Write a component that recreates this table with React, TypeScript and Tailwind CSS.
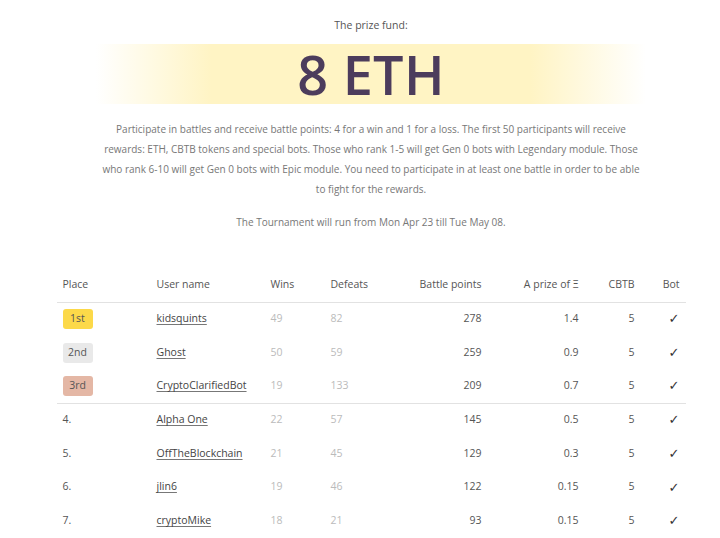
const rows = [
  { place: "1st", badge: "bg-[#fcd949]", name: "kidsquints", wins: 49, defeats: 82, points: 278, prize: "1.4", cbtb: 5 },
  { place: "2nd", badge: "bg-[#e9e9e9]", name: "Ghost", wins: 50, defeats: 59, points: 259, prize: "0.9", cbtb: 5 },
  { place: "3rd", badge: "bg-[#e4b7a5]", name: "CryptoClarifiedBot", wins: 19, defeats: 133, points: 209, prize: "0.7", cbtb: 5 },
  { place: "4.", name: "Alpha One", wins: 22, defeats: 57, points: 145, prize: "0.5", cbtb: 5 },
  { place: "5.", name: "OffTheBlockchain", wins: 21, defeats: 45, points: 129, prize: "0.3", cbtb: 5 },
  { place: "6.", name: "jlin6", wins: 19, defeats: 46, points: 122, prize: "0.15", cbtb: 5 },
  { place: "7.", name: "cryptoMike", wins: 18, defeats: 21, points: 93, prize: "0.15", cbtb: 5 },
];

export default function App() {
  return (
    <div
      className="min-h-screen bg-white pl-[22px] pt-[17px] text-[#555] text-[10.5px]"
      style={{ fontFamily: '"Open Sans", "DejaVu Sans", sans-serif' }}
    >
      {/* Prize fund */}
      <div className="text-center leading-[16px]">The prize fund:</div>
      <div className="mx-auto mt-[11px] h-[60px] w-[550px] bg-[linear-gradient(to_right,rgba(255,244,196,0)_0%,#fff4c4_21%,#fff4c4_79%,rgba(255,244,196,0)_100%)] flex items-center justify-center">
        <span className="text-[54px] font-semibold leading-none tracking-[0.3px] text-[#4c3c5c]">8 ETH</span>
      </div>

      <p className="mx-auto mt-[15px] w-[600px] text-center text-[10px] leading-[20px] text-[#777]">
        Participate in battles and receive battle points: 4 for a win and 1 for a loss. The first 50 participants will receive
        <br />
        rewards: ETH, CBTB tokens and special bots. Those who rank 1-5 will get Gen 0 bots with Legendary module. Those
        <br />
        who rank 6-10 will get Gen 0 bots with Epic module. You need to participate in at least one battle in order to be able
        <br />
        to fight for the rewards.
      </p>
      <p className="mt-[13px] text-center text-[10px] leading-[20px] text-[#777]">
        The Tournament will run from Mon Apr 23 till Tue May 08.
      </p>

      {/* Leaderboard */}
      <table className="mx-auto mt-[36px] w-[629px] border-collapse">
        <thead>
          <tr className="h-[34px] border-b border-[#e2e2e2] text-[#555]">
            <th className="w-[100px] pl-[6px] text-left font-normal">Place</th>
            <th className="w-[114px] text-left font-normal">User name</th>
            <th className="w-[60px] text-left font-normal">Wins</th>
            <th className="w-[60px] text-left font-normal">Defeats</th>
            <th className="w-[91px] text-right font-normal">Battle points</th>
            <th className="w-[97px] text-right font-normal">A prize of Ξ</th>
            <th className="w-[56px] text-right font-normal">CBTB</th>
            <th className="pr-[6px] text-right font-normal">Bot</th>
          </tr>
        </thead>
        <tbody>
          {rows.map((r, i) => (
            <tr key={r.name} className={`h-[33.7px] ${i === 2 ? "border-b border-[#e2e2e2]" : ""}`}>
              <td className="pl-[6px]">
                {r.badge ? (
                  <span className={`inline-flex h-[20px] w-[30px] items-center justify-center rounded-[3px] text-[#555] ${r.badge}`}>
                    {r.place}
                  </span>
                ) : (
                  <span className="text-[#555]">{r.place}</span>
                )}
              </td>
              <td>
                <a className="text-[#444] underline underline-offset-2 decoration-[#777]">{r.name}</a>
              </td>
              <td className="text-[#bbb]">{r.wins}</td>
              <td className="text-[#bbb]">{r.defeats}</td>
              <td className="text-right">{r.points}</td>
              <td className="text-right">{r.prize}</td>
              <td className="text-right">{r.cbtb}</td>
              <td className="pr-[6px] text-right text-[13px] text-[#333] [font-family:'DejaVu_Sans',sans-serif]">✓</td>
            </tr>
          ))}
        </tbody>
      </table>
    </div>
  );
}
